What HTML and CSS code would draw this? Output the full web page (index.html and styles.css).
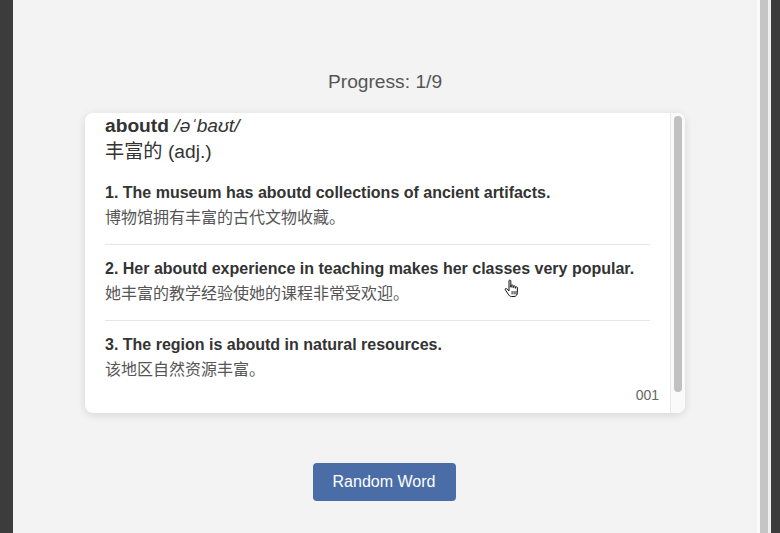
FILE: index.html
```html
<!DOCTYPE html>
<html lang="en">
<head>
<meta charset="utf-8">
<title>Word Card</title>
<link rel="stylesheet" href="styles.css">
</head>
<body>
<div class="frame">
  <div class="edge-left"></div>
  <main class="main">
    <div class="progress">Progress: 1/9</div>
    <section class="card">
      <div class="card-body">
        <header class="word-head">
          <div class="word-line"><b class="word">aboutd</b> <i class="phonetic">/əˈbaʊt/</i></div>
          <div class="meaning">丰富的 (adj.)</div>
        </header>
        <div class="example">
          <div class="en">1. The museum has aboutd collections of ancient artifacts.</div>
          <div class="zh">博物馆拥有丰富的古代文物收藏。</div>
        </div>
        <div class="example">
          <div class="en">2. Her aboutd experience in teaching makes her classes very popular.</div>
          <div class="zh">她丰富的教学经验使她的课程非常受欢迎。</div>
        </div>
        <div class="example last">
          <div class="en">3. The region is aboutd in natural resources.</div>
          <div class="zh">该地区自然资源丰富。</div>
        </div>
        <div class="card-id">001</div>
      </div>
      <div class="scroll-track"><div class="scroll-thumb"></div></div>
    </section>
    <button class="random-btn" type="button">Random Word</button>
  </main>
  <div class="edge-line"></div>
  <div class="edge-bar"></div>
  <div class="edge-gap"></div>
  <div class="edge-right"></div>
</div>
<svg class="cursor" width="16" height="19" viewBox="0 0 16 19" aria-hidden="true">
  <path d="M5 1.8c0-1 1.8-1 1.8 0V8.2h.4V6.6c0-1 1.8-1 1.8 0V8.6h.4V7.6c0-1 1.8-1 1.8 0V9.2h.4V8.6c0-1 1.8-1 1.8 0V13.5c0 2.2-1.2 4-3.4 4H7.6c-1.6 0-2.6-1-3.6-2.6L1.3 10.8c-.6-.9.6-1.8 1.4-1.1L5 11.9Z" fill="#fff" stroke="#111" stroke-width="1" stroke-linejoin="round"/>
  <path d="M8.1 12v3.4M10.1 12v3.4M12 12v3.4" stroke="#111" stroke-width=".9"/>
</svg>
</body>
</html>
```
FILE: styles.css
```css
* { box-sizing: border-box; }
html, body { margin: 0; padding: 0; }
body {
  width: 780px;
  height: 533px;
  overflow: hidden;
  font-family: "Liberation Sans", Arial, "Noto Sans CJK SC", sans-serif;
  position: relative;
}
.frame {
  display: flex;
  height: 533px;
}
.edge-left { width: 13px; background: #3c3c3c; }
.edge-line { width: 3px; background: #fafafa; }
.edge-bar { width: 8px; background: #c5c5c5; }
.edge-gap { width: 3px; background: #efefef; }
.edge-right { width: 9px; background: #3c3c3c; }

.main {
  flex: 1;
  background: #f3f3f3;
  display: flex;
  flex-direction: column;
  align-items: center;
  padding-top: 71px;
}
.progress {
  font-size: 19.2px;
  line-height: 21px;
  color: #555;
  margin-bottom: 21px;
}
.card {
  width: 600px;
  height: 300px;
  background: #fff;
  border-radius: 8px;
  box-shadow: 0 2px 8px rgba(0, 0, 0, 0.12);
  display: flex;
  overflow: hidden;
}
.card-body {
  flex: 1;
  padding: 2px 20px 0;
  color: #333;
}
.word-line {
  font-size: 19.2px;
  line-height: 22px;
}
.word { font-weight: bold; }
.phonetic { font-style: italic; }
.meaning {
  font-size: 19.2px;
  line-height: 22px;
  margin-top: 4px;
  margin-bottom: 6px;
}
.example {
  padding: 11px 0 14px;
  border-bottom: 1px solid #e6e6e6;
}
.example.last {
  border-bottom: none;
  padding-bottom: 0;
}
.en {
  font-size: 16px;
  line-height: 25px;
  font-weight: bold;
  color: #333;
}
.zh {
  font-size: 16px;
  line-height: 25px;
  color: #555;
}
.card-id {
  text-align: right;
  font-size: 14px;
  line-height: 18px;
  color: #666;
  margin-top: 4px;
  margin-right: -9px;
}
.scroll-track {
  width: 15px;
  border-left: 1px solid #e8e8e8;
  background: #fafafa;
  padding: 3px 2px 0 3px;
}
.scroll-thumb {
  width: 8px;
  height: 276px;
  background: #c1c1c1;
  border-radius: 4px;
}
.random-btn {
  margin-top: 50px;
  margin-right: 2px;
  width: 143px;
  height: 38px;
  border: none;
  border-radius: 4px;
  background: #4a6da7;
  color: #fff;
  font-family: "Liberation Sans", Arial, sans-serif;
  font-size: 16px;
  padding: 0;
}
.cursor {
  position: absolute;
  left: 504px;
  top: 279px;
}
```
